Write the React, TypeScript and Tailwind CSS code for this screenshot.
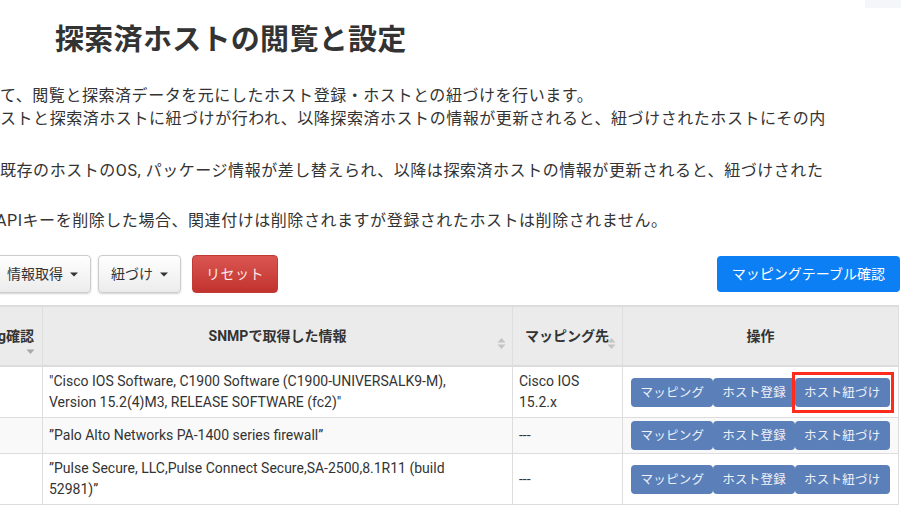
import React from 'react';

// 探索済ホスト一覧 — the page is scrolled a little to the right, so the left edge is clipped.

interface HostRow {
  id: number;
  snmp: React.ReactNode;
  mapping: React.ReactNode;
  striped: boolean;
  highlight: boolean;
}

const rows: HostRow[] = [
  {
    id: 1,
    snmp: <>"Cisco IOS Software, C1900 Software (C1900-UNIVERSALK9-M),<br />Version 15.2(4)M3, RELEASE SOFTWARE (fc2)"</>,
    mapping: <>Cisco IOS<br />15.2.x</>,
    striped: false,
    highlight: true,
  },
  {
    id: 2,
    snmp: <>”Palo Alto Networks PA-1400 series firewall”</>,
    mapping: '---',
    striped: true,
    highlight: false,
  },
  {
    id: 3,
    snmp: <>”Pulse Secure, LLC,Pulse Connect Secure,SA-2500,8.1R11 (build<br />52981)”</>,
    mapping: '---',
    striped: false,
    highlight: false,
  },
];

function Caret() {
  return (
    <svg width="8" height="5" viewBox="0 0 8 5" className="ml-[7px] shrink-0">
      <path d="M0 0.5h8L4 4.5z" fill="#333" />
    </svg>
  );
}

function SortIcon({ onlyDown = false }: { onlyDown?: boolean }) {
  return (
    <svg width="9" height="13" viewBox="0 0 9 13">
      {!onlyDown && <path d="M0.5 5.5L4.5 1l4 4.5z" fill="#c4c4c4" />}
      <path d="M0.5 7.5h8l-4 4.5z" fill={onlyDown ? '#a8a8a8' : '#c4c4c4'} />
    </svg>
  );
}

function ActionButtons({ highlight }: { highlight: boolean }) {
  const btn = 'shrink-0 whitespace-nowrap h-[29px] px-[9px] rounded-[4px] bg-[#5a7fb9] text-[12.5px] tracking-[0.25px] text-[#eef2f8] leading-[29px]';
  return (
    <div className="inline-flex items-center whitespace-nowrap">
      <button className={btn}>マッピング</button>
      <button className={btn}>ホスト登録</button>
      <div className="relative shrink-0">
        <button className={btn}>ホスト紐づけ</button>
        {highlight && (
          <div className="absolute -left-[3px] -right-[4px] -top-[6px] -bottom-[6px] border-[3px] border-[#ff2b1c] pointer-events-none" />
        )}
      </div>
    </div>
  );
}

export default function App() {
  return (
    <div className="relative w-[901px] h-[517px] overflow-hidden bg-white text-[#333] font-[Roboto,'Noto_Sans_CJK_JP',sans-serif]">
      <div className="absolute top-0 right-0 w-[36px] h-[8px] bg-[#f4f6f9]" />

      <div className="pt-[20px]">
        <h1 className="ml-[55px] text-[29px] leading-[40px] font-bold tracking-[0.3px]">探索済ホストの閲覧と設定</h1>

        <div className="mt-[24px] text-[16px] leading-[23px] tracking-[0.55px] whitespace-nowrap">
          <p>て、閲覧と探索済データを元にしたホスト登録・ホストとの紐づけを行います。</p>
          <p>ストと探索済ホストに紐づけが行われ、以降探索済ホストの情報が更新されると、紐づけされたホストにその内</p>
          <p className="mt-[29px]">既存のホストのOS, パッケージ情報が差し替えられ、以降は探索済ホストの情報が更新されると、紐づけされた</p>
          <p className="mt-[27px] -ml-[4px]">APIキーを削除した場合、関連付けは削除されますが登録されたホストは削除されません。</p>
        </div>

        {/* toolbar */}
        <div className="mt-[23px] -ml-[6px] w-[906px] flex items-center text-[14px] leading-[20px]">
          <button className="flex items-center py-2 px-[12px] rounded-[4px] border border-[#ccc] bg-gradient-to-b from-white to-[#ececec] shadow-[0_1px_2px_rgba(0,0,0,0.18)]">
            情報取得<Caret />
          </button>
          <button className="ml-[7px] flex items-center py-2 px-[12px] rounded-[4px] border border-[#ccc] bg-gradient-to-b from-white to-[#ececec] shadow-[0_1px_2px_rgba(0,0,0,0.18)]">
            紐づけ<Caret />
          </button>
          <button className="ml-[11px] py-2 px-[13px] rounded-[4px] border border-[#c23c37] bg-gradient-to-b from-[#da5551] to-[#c2322e] text-[#fbeaea] tracking-[0.5px]">
            リセット
          </button>
          <button className="ml-auto py-2 px-[15px] rounded-[4px] bg-[#0d7ff5] text-white">
            マッピングテーブル確認
          </button>
        </div>

        {/* table */}
        <div className="mt-[12px] -ml-[60px] w-[958px]">
          <table className="w-full table-fixed border-collapse text-[14px]">
            <colgroup>
              <col className="w-[102px]" />
              <col className="w-[470px]" />
              <col className="w-[110px]" />
              <col className="w-[276px]" />
            </colgroup>
            <thead>
              <tr className="bg-[#ebebeb] border-t-2 border-b-2 border-[#dcdcdc] h-[60px] font-bold">
                <th className="relative border border-[#dedede] text-right pr-[8px] font-bold">
                  Ping確認
                  <span className="absolute right-[7px] top-[35px]"><SortIcon onlyDown /></span>
                </th>
                <th className="relative border border-[#dedede] text-center font-bold">
                  SNMPで取得した情報
                  <span className="absolute right-[6px] top-[30px]"><SortIcon /></span>
                </th>
                <th className="relative border border-[#dedede] text-left pl-[12px] font-bold whitespace-nowrap">
                  マッピング先
                  <span className="absolute right-[6px] top-[30px]"><SortIcon /></span>
                </th>
                <th className="border border-[#dedede] text-center font-bold">操作</th>
              </tr>
            </thead>
            <tbody>
              {rows.map(r => (
                <tr key={r.id} className={r.striped ? 'bg-[#f9f9f9]' : 'bg-white'}>
                  <td className="border border-[#dddddd]" />
                  <td className="border border-[#dddddd] px-[6px] py-[4px] leading-[21px] align-middle">{r.snmp}</td>
                  <td className="border border-[#dddddd] px-[6px] py-[4px] leading-[21px] align-middle">{r.mapping}</td>
                  <td className="border border-[#dddddd] px-[4px] py-[3px] text-center align-middle whitespace-nowrap">
                    <ActionButtons highlight={r.highlight} />
                  </td>
                </tr>
              ))}
            </tbody>
          </table>
        </div>
      </div>
    </div>
  );
}
